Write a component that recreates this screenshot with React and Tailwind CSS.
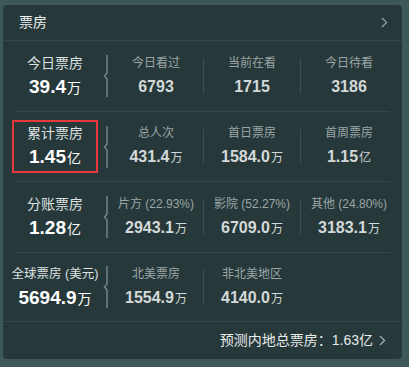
const font = { fontFamily: '"Liberation Sans", "Noto Sans CJK SC", sans-serif' };

const rows = [
  {
    title: '今日票房',
    num: '39.4',
    unit: '万',
    h: 'h-[70px]',
    cols: [
      { label: '今日看过', num: '6793' },
      { label: '当前在看', num: '1715' },
      { label: '今日待看', num: '3186' },
    ],
  },
  {
    title: '累计票房',
    num: '1.45',
    unit: '亿',
    h: 'h-[69px]',
    boxed: true,
    cols: [
      { label: '总人次', num: '431.4', unit: '万' },
      { label: '首日票房', num: '1584.0', unit: '万' },
      { label: '首周票房', num: '1.15', unit: '亿' },
    ],
  },
  {
    title: '分账票房',
    num: '1.28',
    unit: '亿',
    h: 'h-[70px]',
    cols: [
      { label: '片方 (22.93%)', num: '2943.1', unit: '万' },
      { label: '影院 (52.27%)', num: '6709.0', unit: '万' },
      { label: '其他 (24.80%)', num: '3183.1', unit: '万' },
    ],
  },
  {
    title: '全球票房 (美元)',
    small: true,
    num: '5694.9',
    unit: '万',
    h: 'h-[68px]',
    cols: [
      { label: '北美票房', num: '1554.9', unit: '万' },
      { label: '非北美地区', num: '4140.0', unit: '万' },
      null,
    ],
  },
];

function Bracket() {
  return (
    <svg width="6" height="42" viewBox="0 0 6 42" className="shrink-0">
      <path d="M4 0 V18 L1.5 21 L4 24 V42" fill="none" stroke="#6f8080" strokeWidth="1.6" />
    </svg>
  );
}

function Sep({ show }) {
  return <div className={`w-px h-[35px] shrink-0 ${show ? 'bg-[#3b4f51]' : ''}`} />;
}

function Cell({ col, width }) {
  return (
    <div className={`${width} shrink-0 flex flex-col items-center`}>
      {col && (
        <>
          <div className="text-[12px] leading-[20px] text-[#9ba6a6] whitespace-nowrap">{col.label}</div>
          <div className="mt-[2px] leading-[24px] text-[16px] font-semibold text-[#d3d8d8] whitespace-nowrap">
            {col.num}
            {col.unit && <span className="text-[12px] font-normal ml-[1px]">{col.unit}</span>}
          </div>
        </>
      )}
    </div>
  );
}

function Row({ row }) {
  const main = (
    <>
      <div
        className={`leading-[20px] text-[#dde1e1] whitespace-nowrap ${row.small ? 'text-[12.5px]' : 'text-[14px]'}`}
      >
        {row.title}
      </div>
      <div className="mt-[2px] leading-[24px] text-[19px] font-bold text-white whitespace-nowrap">
        {row.num}
        <span className="text-[14px] font-normal ml-[1px]">{row.unit}</span>
      </div>
    </>
  );
  return (
    <div className={`flex items-center ${row.h}`}>
      <div className="w-[100px] pl-[4px] shrink-0 flex justify-center">
        {row.boxed ? (
          <div className="w-[86px] h-[53px] border-2 border-[#e5393b] flex flex-col items-center justify-center">
            {main}
          </div>
        ) : (
          <div className="flex flex-col items-center">{main}</div>
        )}
      </div>
      <Bracket />
      <Cell col={row.cols[0]} width="w-[94px]" />
      <Sep show />
      <Cell col={row.cols[1]} width="w-[96px]" />
      <Sep show={!!row.cols[2]} />
      <Cell col={row.cols[2]} width="w-[96px]" />
    </div>
  );
}

function Chevron({ color = '#8e9b9b' }) {
  return (
    <svg width="7" height="11" viewBox="0 0 7 11">
      <path d="M1 1 L5.5 5.5 L1 10" fill="none" stroke={color} strokeWidth="1.4" />
    </svg>
  );
}

export default function App() {
  return (
    <div className="w-[409px] h-[367px] bg-[#3c5858] pt-[5px] pl-[3px]" style={font}>
      <div className="w-[399px] rounded-[4px] bg-[#26383a] overflow-hidden">
        <div className="h-[36px] border-b border-[#34474a] flex items-center justify-between pl-[16px] pr-[14px]">
          <span className="text-[14px] text-[#eef0f0]">票房</span>
          <Chevron />
        </div>
        {rows.map((row, i) => (
          <div key={row.title}>
            {i > 0 && <div className="h-px mx-[12px] bg-[#34474a]" />}
            <Row row={row} />
          </div>
        ))}
        <div className="h-[38px] border-t border-[#34474a] flex items-center justify-end pr-[16px] gap-[6px]">
          <span className="text-[14px] text-[#e8ebeb]">预测内地总票房：1.63亿</span>
          <Chevron color="#a0abab" />
        </div>
      </div>
    </div>
  );
}
